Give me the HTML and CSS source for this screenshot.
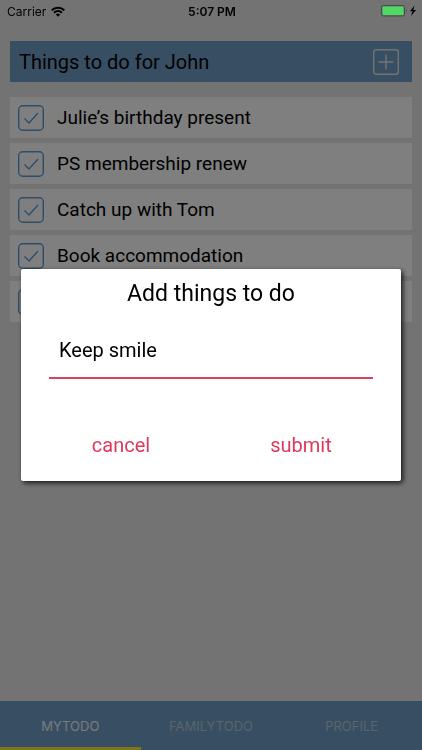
FILE: index.html
```html
<!DOCTYPE html>
<html lang="en">
<head>
  <meta charset="UTF-8">
  <meta name="viewport" content="width=device-width, initial-scale=1">
  <title>My Todo</title>
  <link rel="stylesheet" href="styles.css">
</head>
<body>
  <div class="status-bar">
    <div class="carrier">
      <span>Carrier</span>
      <svg width="14" height="11" viewBox="0 0 14 11" fill="none" stroke="#000" stroke-width="2">
        <path d="M0.7 4.2a9 9 0 0 1 12.6 0"/>
        <path d="M3 6.7a5.7 5.7 0 0 1 8 0"/>
        <path d="M7 10.8L4.8 8.6a3.2 3.2 0 0 1 4.4 0z" fill="#000" stroke="none"/>
      </svg>
    </div>
    <span class="clock">5:07 PM</span>
    <div class="battery">
      <svg width="36" height="12" viewBox="0 0 36 12">
        <rect x="0.5" y="0.5" width="23" height="10.5" rx="2" fill="none" stroke="#4a4a4a"/>
        <rect x="1.5" y="1.5" width="21" height="8.5" rx="1" fill="#4cd964"/>
        <path d="M25 4q1.5 1.7 0 3.5z" fill="#444"/>
        <path d="M33.500 0.500l-4.500 5.700h2.500L30 11l5-6h-2.700z" fill="#000"/>
      </svg>
    </div>
  </div>

  <main>
    <header class="list-header">
      <h1>Things to do for John</h1>
      <button class="add-btn" aria-label="Add">
        <svg width="26" height="26" viewBox="0 0 26 26" fill="none" stroke="currentColor" stroke-width="1.4">
          <rect x="0.7" y="0.7" width="24.6" height="24.6" rx="2.5"/>
          <path d="M13 5.5v15M5.5 13h15"/>
        </svg>
      </button>
    </header>

    <ul class="todo-list">
      <li><label><input type="checkbox" checked><svg class="tick" viewBox="0 0 26 26"><rect x="0.7" y="0.7" width="24.6" height="24.6" rx="4"/><path d="M6.5 13.500l4.500 4.500 9-10"/></svg><span>Julie’s birthday present</span></label></li>
      <li><label><input type="checkbox" checked><svg class="tick" viewBox="0 0 26 26"><rect x="0.7" y="0.7" width="24.6" height="24.6" rx="4"/><path d="M6.5 13.500l4.500 4.500 9-10"/></svg><span>PS membership renew</span></label></li>
      <li><label><input type="checkbox" checked><svg class="tick" viewBox="0 0 26 26"><rect x="0.7" y="0.7" width="24.6" height="24.6" rx="4"/><path d="M6.5 13.500l4.500 4.500 9-10"/></svg><span>Catch up with Tom</span></label></li>
      <li><label><input type="checkbox" checked><svg class="tick" viewBox="0 0 26 26"><rect x="0.7" y="0.7" width="24.6" height="24.6" rx="4"/><path d="M6.5 13.500l4.500 4.500 9-10"/></svg><span>Book accommodation</span></label></li>
      <li><label><input type="checkbox" checked aria-label="Todo"><svg class="tick" viewBox="0 0 26 26"><rect x="0.7" y="0.7" width="24.6" height="24.6" rx="4"/><path d="M6.5 13.500l4.500 4.500 9-10"/></svg></label></li>
    </ul>
  </main>

  <nav class="tabs">
    <a href="#mytodo" class="active">MYTODO</a>
    <a href="#familytodo">FAMILYTODO</a>
    <a href="#profile">PROFILE</a>
  </nav>

  <div class="overlay">
    <form class="modal" role="dialog" aria-labelledby="modalTitle">
      <h2 id="modalTitle">Add things to do</h2>
      <input type="text" value="Keep smile" aria-labelledby="modalTitle">
      <div class="actions">
        <button type="button">cancel</button>
        <button type="submit">submit</button>
      </div>
    </form>
  </div>
</body>
</html>
```
FILE: styles.css
```css
* { box-sizing: border-box; }
body {
  margin: 0;
  min-height: 100vh;
  display: flex;
  flex-direction: column;
  font-family: Roboto, "Liberation Sans", sans-serif;
  background: #e6e6e6;
  color: #000;
}
h1, h2 { margin: 0; font-weight: 400; }
button {
  padding: 0;
  border: none;
  background: none;
  font: inherit;
  cursor: pointer;
}
svg { display: block; }

/* status bar stays above the dimmed overlay */
.status-bar {
  position: relative;
  z-index: 2;
  display: grid;
  grid-template-columns: 1fr auto 1fr;
  align-items: center;
  height: 22px;
  padding: 0 5px 0 7px;
  font-family: Inter, "Liberation Sans", sans-serif;
  font-size: 12px;
}
.carrier { display: flex; align-items: center; gap: 5px; }
.clock { font-weight: 600; }
.battery { justify-self: end; }

main { flex: 1; padding: 19px 10px 0; }
.list-header {
  display: flex;
  align-items: center;
  justify-content: space-between;
  height: 41px;
  padding: 0 13px 0 9px;
  background: #709ec6;
}
.list-header h1 { font-size: 20px; }
.add-btn { color: #e6e6e6; }

.todo-list {
  display: flex;
  flex-direction: column;
  gap: 5px;
  margin: 15px 0 0;
  padding: 0;
  list-style: none;
}
.todo-list li { background: #fff; }
.todo-list label {
  display: grid;
  grid-template-columns: 26px 1fr;
  column-gap: 13px;
  align-items: center;
  height: 41px;
  padding: 0 8px;
  font-size: 19px;
}
.todo-list input {
  grid-area: 1 / 1;
  appearance: none;
  width: 26px;
  height: 26px;
  margin: 0;
}
.tick {
  grid-area: 1 / 1;
  width: 26px;
  height: 26px;
  fill: none;
  stroke: #5a9cd0;
  stroke-width: 1.4;
}
.todo-list input:not(:checked) + .tick path { visibility: hidden; }

.tabs {
  display: grid;
  grid-template-columns: repeat(3, 1fr);
  height: 49px;
  background: #709ec6;
}
.tabs a {
  display: flex;
  align-items: center;
  justify-content: center;
  border-bottom: 3px solid transparent;
  padding-top: 3px;
  font-family: Inter, "Liberation Sans", sans-serif;
  font-size: 13px;
  color: #b2c8dc;
  text-decoration: none;
}
.tabs .active { color: #f0f4f8; border-color: #ffeb3b; }

.overlay {
  position: fixed;
  inset: 0;
  display: flex;
  align-items: center;
  padding: 0 21px;
  background: rgba(0, 0, 0, 0.5);
}
.modal {
  flex: 1;
  padding: 8px 28px 16px;
  border-radius: 2px;
  background: #fff;
  box-shadow: 2px 2px 5px rgba(0, 0, 0, 0.8);
}
.modal h2 {
  font-size: 23px;
  line-height: 34px;
  text-align: center;
}
.modal input {
  display: block;
  width: 100%;
  height: 56px;
  margin-top: 12px;
  padding: 0 10px;
  border: none;
  border-bottom: 2px solid #d8435f;
  outline: none;
  background: none;
  font: inherit;
  font-size: 20px;
}
.actions {
  display: grid;
  grid-template-columns: 1fr 1fr;
  margin: 46px -18px 0;
}
.actions button {
  height: 40px;
  font-size: 20px;
  color: #e0385c;
}
```
